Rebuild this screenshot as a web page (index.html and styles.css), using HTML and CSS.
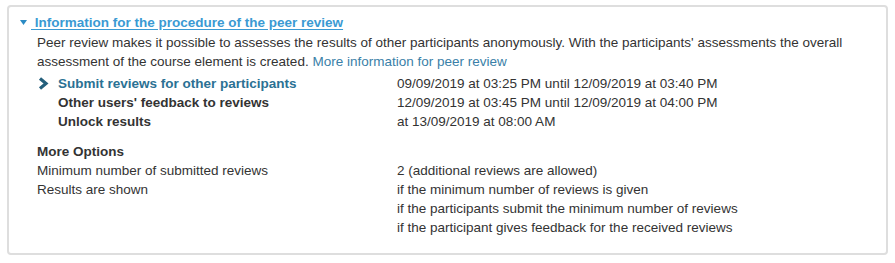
FILE: index.html
```html
<!DOCTYPE html>
<html lang="en">
<head>
  <meta charset="UTF-8" />
  <title>Peer review</title>
  <link rel="stylesheet" href="styles.css">
</head>
<body>

  <div class="panel">
    <a class="panel-title" href="#">
      <svg class="caret" width="7" height="5" viewBox="0 0 7 5"><path d="M0 0 L7 0 L3.5 5 Z" fill="#2b8bc4"/></svg>
      Information for the procedure of the peer review</a>

    <div class="panel-body">
      <p class="desc">
        Peer review makes it possible to assesses the results of other participants anonymously. With the participants' assessments the overall
        assessment of the course element is created. <a href="#" class="more-link">More information for peer review</a>
      </p>

      <div class="steps">
        <div class="step-label current">
          <svg class="chevron" width="11" height="13" viewBox="0 0 11 13"><path d="M2 1.5 L8 6.5 L2 11.5" fill="none" stroke="#245f7c" stroke-width="3.2"/></svg>
          Submit reviews for other participants
        </div>
        <div class="step-value">09/09/2019 at 03:25 PM until 12/09/2019 at 03:40 PM</div>

        <div class="step-label">Other users' feedback to reviews</div>
        <div class="step-value">12/09/2019 at 03:45 PM until 12/09/2019 at 04:00 PM</div>

        <div class="step-label">Unlock results</div>
        <div class="step-value">at 13/09/2019 at 08:00 AM</div>
      </div>

      <div class="options">
        <div class="options-title">More Options</div>
        <div class="opt-label">Minimum number of submitted reviews</div>
        <div class="opt-value">2 (additional reviews are allowed)</div>

        <div class="opt-label">Results are shown</div>
        <div class="opt-value">
          if the minimum number of reviews is given<br>
          if the participants submit the minimum number of reviews<br>
          if the participant gives feedback for the received reviews
        </div>
      </div>
    </div>
  </div>

</body>
</html>
```

FILE: styles.css
```css
* {
  margin: 0;
  padding: 0;
  box-sizing: border-box;
}

body {
  font-family: "Liberation Sans", Arial, sans-serif;
  font-size: 13.5px;
  line-height: 19px;
  color: #333;
  background: #fff;
  padding: 5px 8px 0 7px;
}

.panel {
  width: 881px;
  height: 250px;
  border: 2px solid #dedede;
  border-radius: 4px;
  padding: 6px 11px 0 11px;
}

.panel-title {
  display: inline-block;
  color: #3a9ad3;
  font-weight: bold;
  text-decoration: underline;
  text-underline-offset: 2px;
}

.caret {
  vertical-align: 2px;
  margin-right: 4px;
}

.panel-body {
  padding-left: 17px;
  margin-top: 1px;
}

.desc {
  margin-bottom: 3px;
}

.more-link {
  color: #3a7fa8;
  text-decoration: none;
}

.steps,
.options {
  display: grid;
  grid-template-columns: 360px 1fr;
}

.step-label {
  font-weight: bold;
  padding-left: 21px;
  position: relative;
}

.step-label.current {
  color: #2b7194;
}

.chevron {
  position: absolute;
  left: 1px;
  top: 3px;
}

.options {
  margin-top: 11px;
}

.options-title {
  grid-column: 1 / 3;
  font-weight: bold;
}
```
